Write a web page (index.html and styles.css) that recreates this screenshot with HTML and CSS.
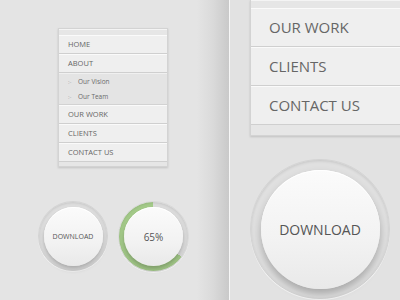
FILE: index.html
```html
<!DOCTYPE html>
<html lang="en">
<head>
    <meta charset="UTF-8">
    <title>Menu and buttons</title>
    <link rel="stylesheet" href="styles.css">
</head>
<body>
    <div class="left-side">
        <div class="menu small-menu">
            <div class="menu-item">HOME</div>
            <div class="menu-item">ABOUT</div>
            <div class="submenu">
                <div class="sub-item"><span class="tree">:-</span>Our Vision</div>
                <div class="sub-item"><span class="tree">:-</span>Our Team</div>
            </div>
            <div class="menu-item">OUR WORK</div>
            <div class="menu-item">CLIENTS</div>
            <div class="menu-item">CONTACT US</div>
        </div>

        <div class="buttons">
            <div class="ring small-ring">
                <div class="knob">DOWNLOAD</div>
            </div>
            <div class="ring small-ring progress">
                <div class="knob percent">65%</div>
            </div>
        </div>
    </div>

    <div class="right-side">
        <div class="menu big-menu">
            <div class="menu-item">OUR WORK</div>
            <div class="menu-item">CLIENTS</div>
            <div class="menu-item">CONTACT US</div>
        </div>

        <div class="ring big-ring">
            <div class="knob big-knob">DOWNLOAD</div>
        </div>
    </div>
</body>
</html>
```

FILE: styles.css
```css
body {
    margin: 0;
    width: 400px;
    height: 300px;
    overflow: hidden;
    display: flex;
    font-family: "Open Sans", "Liberation Sans", sans-serif;
    color: #666;
    background: #e2e2e2;
}

.left-side {
    width: 229px;
    flex-shrink: 0;
    background: linear-gradient(90deg, #e4e4e4 0%, #e4e4e4 86%, #dadada 93%, #c9c9c9 100%);
    border-right: 1px solid #f7f7f7;
}

.right-side {
    flex: 1;
    padding-left: 20px;
    overflow: hidden;
}

/* menus */
.menu {
    background: #e6e6e6;
    border: 1px solid #d3d3d3;
    box-shadow: 0 1px 2px rgba(0,0,0,0.15), inset 0 1px 0 #f4f4f4;
}

.menu-item {
    background: #efefef;
    border-top: 1px solid #fafafa;
    border-bottom: 1px solid #cfcfcf;
}

.small-menu {
    width: 108px;
    margin: 28px 0 0 58px;
    padding: 6px 0 4px;
}

.small-menu .menu-item {
    height: 17px;
    line-height: 17px;
    padding-left: 9px;
    font-size: 7.5px;
}

.submenu {
    background: #e4e4e4;
    border-top: 1px solid #f0f0f0;
    border-bottom: 1px solid #d2d2d2;
    padding: 0;
}

.sub-item {
    height: 15px;
    line-height: 15px;
    padding-left: 9px;
    font-size: 6.5px;
    color: #6a6a6a;
}

.tree {
    display: inline-block;
    width: 10px;
    color: #aaa;
    font-size: 6px;
}

.big-menu {
    width: 200px;
    padding: 8px 0 10px;
    border-right: none;
    border-top: none;
}

.big-menu .menu-item {
    height: 37px;
    line-height: 37px;
    padding-left: 18px;
    font-size: 15px;
}

/* round buttons */
.buttons {
    display: flex;
    gap: 10px;
    margin: 34px 0 0 38px;
}

.ring {
    border-radius: 50%;
    display: flex;
    align-items: center;
    justify-content: center;
    background: #e0e0e0;
    border: 1px solid #d4d4d4;
    box-shadow: inset 0 1px 3px rgba(0,0,0,0.12), 0 1px 0 #f3f3f3;
    box-sizing: border-box;
}

.small-ring {
    width: 70px;
    height: 70px;
}

.progress {
    width: 71px;
    height: 71px;
    border: 1px solid #dadada;
    background: conic-gradient(#dedede 0 35%, #a6cd8b 35% 100%);
}

.knob {
    width: 59px;
    height: 59px;
    border-radius: 50%;
    background: linear-gradient(180deg, #fbfbfb 0%, #f2f2f2 60%, #e9e9e9 100%);
    box-shadow: 0 3px 5px rgba(0,0,0,0.25), inset 0 1px 0 #fff;
    display: flex;
    align-items: center;
    justify-content: center;
    font-size: 7px;
    color: #555;
}

.percent {
    width: 59px;
    height: 59px;
    font-size: 10px;
}

.big-ring {
    width: 140px;
    height: 140px;
    margin-top: 23px;
}

.big-knob {
    width: 119px;
    height: 119px;
    font-size: 14px;
    box-shadow: 0 5px 9px rgba(0,0,0,0.25), inset 0 1px 0 #fff;
}
```
